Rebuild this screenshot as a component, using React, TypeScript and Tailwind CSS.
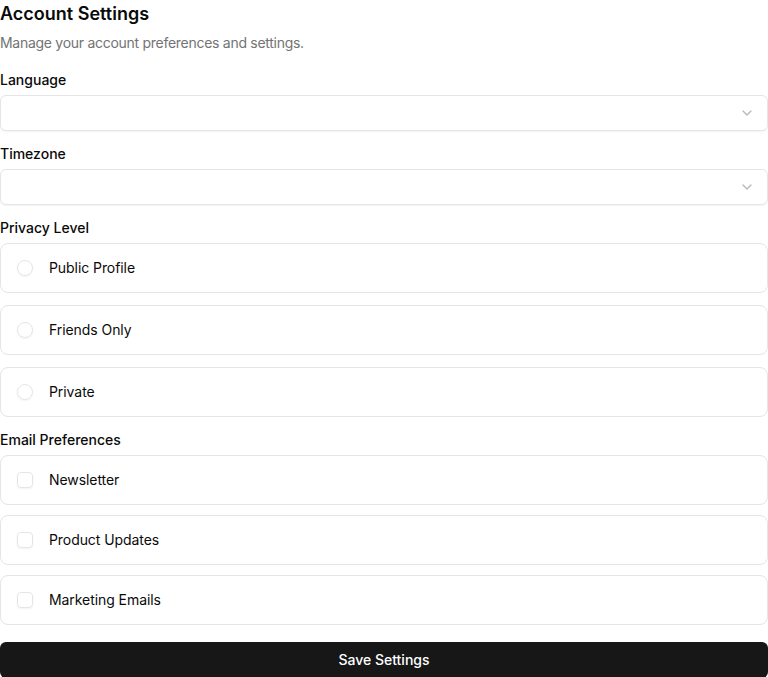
import React from "react";
import { ChevronDown } from "lucide-react";

function Select() {
  return (
    <button
      type="button"
      className="flex h-9 w-full items-center justify-between rounded-md border border-[#e5e5e5] bg-white px-3 shadow-xs"
    >
      <span />
      <ChevronDown className="h-4 w-4 text-[#737373] opacity-50" />
    </button>
  );
}

function RadioCard({ label }: { label: string }) {
  return (
    <label className="flex items-center gap-4 rounded-lg border border-[#e5e5e5] bg-white p-4">
      <span className="block h-4 w-4 shrink-0 rounded-full border border-[#e5e5e5] shadow-xs" />
      <span className="text-sm font-normal leading-none tracking-[-0.005em] text-[#0a0a0a]">{label}</span>
    </label>
  );
}

function CheckCard({ label }: { label: string }) {
  return (
    <label className="flex items-center gap-4 rounded-lg border border-[#e5e5e5] bg-white p-4">
      <span className="block h-4 w-4 shrink-0 rounded-[4px] border border-[#e5e5e5] shadow-xs" />
      <span className="text-sm font-normal leading-none tracking-[-0.005em] text-[#0a0a0a]">{label}</span>
    </label>
  );
}

export default function App() {
  return (
    <div
      className="w-[768px] bg-white text-[#0a0a0a]"
      style={{ fontFamily: "Inter, 'Noto Sans', sans-serif" }}
    >
      <h1 className="text-lg font-semibold leading-7">Account Settings</h1>
      <p className="mt-[5px] text-sm leading-5 tracking-[-0.02em] text-[#737373]">
        Manage your account preferences and settings.
      </p>

      <div className="mt-5 flex flex-col gap-4">
        <div className="flex flex-col gap-2">
          <div className="text-sm font-medium leading-none">Language</div>
          <Select />
        </div>
        <div className="flex flex-col gap-2">
          <div className="text-sm font-medium leading-none">Timezone</div>
          <Select />
        </div>
        <div className="flex flex-col gap-2">
          <div className="text-sm font-medium leading-none">Privacy Level</div>
          <div className="flex flex-col gap-3">
            <RadioCard label="Public Profile" />
            <RadioCard label="Friends Only" />
            <RadioCard label="Private" />
          </div>
        </div>
        <div className="flex flex-col gap-2">
          <div className="text-sm font-medium leading-none">Email Preferences</div>
          <div className="flex flex-col gap-2.5">
            <CheckCard label="Newsletter" />
            <CheckCard label="Product Updates" />
            <CheckCard label="Marketing Emails" />
          </div>
        </div>
        <button
          type="button"
          className="mt-px h-9 w-full rounded-md bg-[#171717] text-sm font-medium text-white"
        >
          Save Settings
        </button>
      </div>
    </div>
  );
}
